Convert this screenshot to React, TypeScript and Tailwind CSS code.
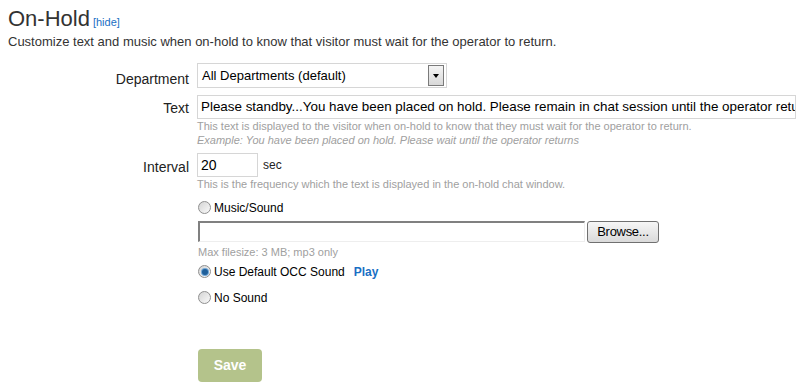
import React, { useState } from 'react';

function Radio({ checked }: { checked?: boolean }) {
    return (
        <span className="w-[13px] h-[13px] rounded-full border border-[#8f8f8f] bg-gradient-to-br from-[#d4d4d4] to-[#fafafa] flex items-center justify-center shrink-0">
            {checked && <span className="w-[6px] h-[6px] rounded-full bg-[#1f5f9a] ring-1 ring-[#6fa6d6]" />}
        </span>
    );
}

export default function App() {
    const [sound, setSound] = useState<'music' | 'default' | 'none'>('default');
    const [text, setText] = useState(
        'Please standby...You have been placed on hold. Please remain in chat session until the operator returns.'
    );
    const [interval, setIntervalValue] = useState('20');

    return (
        <div className="w-[804px] h-[387px] bg-white text-[#333] font-['Liberation_Sans',Arial,sans-serif] px-2 overflow-hidden">
            {/* Header */}
            <div className="pt-[6px] h-[31px] flex items-baseline gap-[3px] leading-[25px]">
                <h1 className="text-[22px] text-[#333]">On-Hold</h1>
                <a className="text-[11px] leading-[12px] text-[#1a6fc4]">[hide]</a>
            </div>
            <p className="text-[13px] leading-[16px] mt-[3px] text-[#333]">
                Customize text and music when on-hold to know that visitor must wait for the operator to return.
            </p>

            {/* Department */}
            <div className="flex mt-[13px]">
                <div className="w-[181px] shrink-0 text-right text-[14px] text-[#222] pt-[6px]">Department</div>
                <div className="ml-[8px] w-[250px] h-[25px] border border-[#d6d6d6] flex items-center pl-[4px] pr-[2px]">
                    <span className="flex-1 text-[13px] text-black">All Departments (default)</span>
                    <span className="w-[16px] h-[21px] border border-[#7a7a7a] bg-gradient-to-b from-[#f4f4f4] to-[#d8d8d8] flex items-center justify-center">
                        <span className="w-0 h-0 border-l-[3.5px] border-r-[3.5px] border-t-[4px] border-l-transparent border-r-transparent border-t-black" />
                    </span>
                </div>
            </div>

            {/* Text */}
            <div className="flex mt-[4px]">
                <div className="w-[181px] shrink-0 text-right text-[14px] text-[#222] pt-[4px]">Text</div>
                <div className="ml-[8px] flex-1 min-w-0">
                    <input
                        type="text"
                        value={text}
                        onChange={e => setText(e.target.value)}
                        className="w-full h-[24px] border border-[#d6d6d6] pl-[3px] pr-0 text-[13.4px] text-black outline-none"
                    />
                    <p className="text-[11px] text-[#a0a0a0] leading-[14px]">
                        This text is displayed to the visitor when on-hold to know that they must wait for the operator to return.
                    </p>
                    <p className="text-[11px] text-[#a0a0a0] leading-[14px] italic">
                        Example: You have been placed on hold. Please wait until the operator returns
                    </p>
                </div>
            </div>

            {/* Interval */}
            <div className="flex mt-[6px]">
                <div className="w-[181px] shrink-0 text-right text-[14px] text-[#222] pt-[4px]">Interval</div>
                <div className="ml-[8px] flex-1 min-w-0">
                    <div className="flex items-center">
                        <input
                            type="text"
                            value={interval}
                            onChange={e => setIntervalValue(e.target.value)}
                            className="w-[61px] h-[24px] border border-[#d6d6d6] px-[3px] text-[14px] text-black outline-none"
                        />
                        <span className="ml-[5px] text-[12px] text-[#222]">sec</span>
                    </div>
                    <p className="text-[11px] text-[#a0a0a0] leading-[14px]">
                        This is the frequency which the text is displayed in the on-hold chat window.
                    </p>
                </div>
            </div>

            {/* Sound options */}
            <div className="ml-[190px] mt-[9px] text-[12px] text-black">
                <label className="flex items-center gap-[3px] h-[16px]" onClick={() => setSound('music')}>
                    <Radio checked={sound === 'music'} />
                    <span>Music/Sound</span>
                </label>
                <div className="flex items-center mt-[5px]">
                    <div className="w-[387px] h-[21px] bg-white border-t-2 border-l-2 border-[#808080] border-r border-b border-r-[#eee] border-b-[#eee]" />
                    <button className="ml-[2px] w-[72px] h-[22px] rounded-[3px] border border-[#707070] bg-gradient-to-b from-[#f6f6f6] to-[#dadada] text-[13px] tracking-[-0.3px] text-black leading-none">
                        Browse...
                    </button>
                </div>
                <p className="text-[11px] text-[#a0a0a0] leading-[14px] mt-[2px]">Max filesize: 3 MB; mp3 only</p>
                <label className="flex items-center gap-[3px] h-[16px] mt-[5px]" onClick={() => setSound('default')}>
                    <Radio checked={sound === 'default'} />
                    <span>Use Default OCC Sound</span>
                    <a className="ml-[6px] font-bold text-[#1a6fc4]">Play</a>
                </label>
                <label className="flex items-center gap-[3px] h-[16px] mt-[10px]" onClick={() => setSound('none')}>
                    <Radio checked={sound === 'none'} />
                    <span>No Sound</span>
                </label>

                <button className="mt-[43px] w-[64px] h-[33px] rounded-[4px] bg-[#b4c38b] text-white font-bold text-[14px]">
                    Save
                </button>
            </div>
        </div>
    );
}
